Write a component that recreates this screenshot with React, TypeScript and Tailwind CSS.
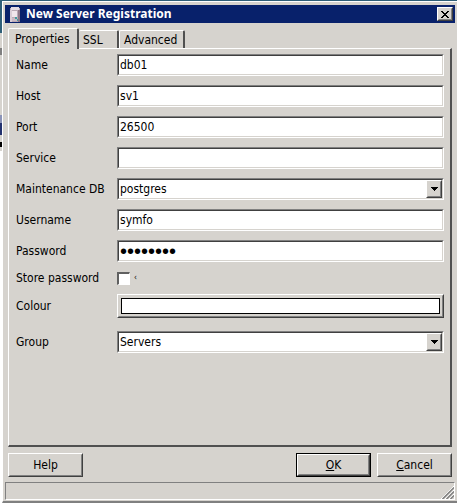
import { useState } from 'react';
import type { ReactNode } from 'react';

const raised = 'border border-t-white border-l-white border-r-[#404040] border-b-[#404040]';
const raisedInner = 'border border-t-[#d6d3ce] border-l-[#d6d3ce] border-r-[#808080] border-b-[#808080]';
const sunken = 'border border-t-[#808080] border-l-[#808080] border-r-white border-b-white';
const sunkenInner = 'border border-t-[#404040] border-l-[#404040] border-r-[#d6d3ce] border-b-[#d6d3ce]';

const behind = [
    { height: 'h-[33px]', color: 'bg-[#2f5f78]' },
    { height: 'h-[15px]', color: 'bg-[#d6d3ce]' },
    { height: 'h-[7px]', color: 'bg-[#808080]' },
    { height: 'h-[60px]', color: 'bg-[#d6d3ce]' },
    { height: 'h-[8px]', color: 'bg-[#8c94b8]' },
    { height: 'h-[12px]', color: 'bg-[#24326e]' },
    { height: 'h-[7px]', color: 'bg-[#d6d3ce]' },
    { height: 'h-[5px]', color: 'bg-black' },
    { height: 'h-[4px]', color: 'bg-[#d6d3ce]' },
];

function Row({ id, label, children }: { id: string; label: string; children: ReactNode }) {
    return (
        <div className="flex items-center">
            <label htmlFor={id} className="w-[101px] shrink-0 leading-[14px]">
                {label}
            </label>
            {children}
        </div>
    );
}

function TextField({ id, label, value, type = 'text' }: { id: string; label: string; value: string; type?: string }) {
    const [text, setText] = useState(value);
    const font = type === 'password' ? "font-['Liberation_Sans',sans-serif] text-[20px] leading-[16px]" : 'pb-px';
    return (
        <Row id={id} label={label}>
            <div className={`flex h-[22px] min-w-0 flex-1 ${sunken}`}>
                <input
                    id={id}
                    type={type}
                    value={text}
                    onChange={(e) => setText(e.target.value)}
                    className={`w-full min-w-0 bg-white px-px outline-none ${font} ${sunkenInner}`}
                />
            </div>
        </Row>
    );
}

function SelectField({ id, label, value }: { id: string; label: string; value: string }) {
    return (
        <Row id={id} label={label}>
            <div className={`h-[22px] min-w-0 flex-1 ${sunken}`}>
                <div className={`relative flex h-full bg-white ${sunkenInner}`}>
                    <select id={id} defaultValue={value} className="w-full appearance-none bg-transparent px-px pb-px outline-none">
                        <option>{value}</option>
                    </select>
                    <span className={`pointer-events-none absolute inset-y-0 right-0 w-4 bg-[#d6d3ce] ${raised}`}>
                        <span className={`flex h-full items-center justify-center ${raisedInner}`}>
                            <svg width="7" height="4" viewBox="0 0 7 4" shapeRendering="crispEdges">
                                <path d="M0 0h7v1H0zM1 1h5v1H1zM2 2h3v1H2zM3 3h1v1H3z" />
                            </svg>
                        </span>
                    </span>
                </div>
            </div>
        </Row>
    );
}

function PushButton({ children, primary = false }: { children: ReactNode; primary?: boolean }) {
    return (
        <button type="button" className={`h-6 w-[75px] ${primary ? 'border border-black' : ''}`}>
            <span className={`block h-full ${raised}`}>
                <span className={`flex h-full items-center justify-center ${raisedInner}`}>
                    <span>{children}</span>
                </span>
            </span>
        </button>
    );
}

function TitleBar() {
    return (
        <header className="flex h-[18px] items-center bg-[#08216b] pr-[2px] pl-1 text-white">
            <svg width="12" height="17" viewBox="0 0 12 17" shapeRendering="crispEdges">
                <path d="M2 1h8v1h1v14H1V2h1z" fill="#b9a9b5" />
                <path d="M2 1h8v3H2z" fill="#e4dce4" />
                <path d="M1 4h2v12H1z" fill="#d9cdd6" />
                <path d="M3 5h5v6H3z" fill="#f0e6ec" />
                <path d="M9 4h2v12H9z" fill="#8d7888" />
                <path d="M3 12h5v3H3z" fill="#cbb9c3" />
                <path d="M6 11h2v2H6zM8 13h1v2H8z" fill="#3f9ca0" />
            </svg>
            <h1 className="flex-1 pl-[5px] font-['Noto_Sans',sans-serif] text-[12px] leading-[18px] font-bold">New Server Registration</h1>
            <button type="button" aria-label="Close" className={`h-[14px] w-4 bg-[#d6d3ce] ${raised}`}>
                <span className={`flex h-full items-center justify-center ${raisedInner}`}>
                    <svg width="8" height="7" viewBox="0 0 8 7" shapeRendering="crispEdges">
                        <path d="M0 0h2v1h1v1h2V1h1V0h2v1H7v1H6v1H5v1h1v1h1v1h1v1H6V6H5V5H3v1H2v1H0V6h1V5h1V4h1V3H2V2H1V1H0z" fill="#000" />
                    </svg>
                </span>
            </button>
        </header>
    );
}

function Tabs() {
    const tab = 'rounded-t-[2px] border-t border-t-white border-l-white border-r-2 border-r-[#505050] text-left';
    return (
        <div role="tablist" className="flex items-end px-[3px]">
            <button type="button" role="tab" aria-selected="true" className={`relative -mb-px h-[21px] w-[71px] border-l bg-[#d6d3ce] pb-px pl-[6px] ${tab}`}>
                Properties
            </button>
            <button type="button" role="tab" aria-selected="false" className={`h-[18px] w-10 pl-1 ${tab}`}>
                SSL
            </button>
            <button type="button" role="tab" aria-selected="false" className={`h-[18px] w-[66px] border-l pl-1 ${tab}`}>
                Advanced
            </button>
        </div>
    );
}

export default function App() {
    return (
        <div className="flex min-h-screen bg-white font-['DejaVu_Sans_Condensed','DejaVu_Sans','Noto_Sans_CJK_JP',sans-serif] text-[12px] leading-[16px] text-black">
            <div className="w-[2px] shrink-0">
                {behind.map((b, i) => (
                    <div key={i} className={`${b.height} ${b.color}`} />
                ))}
            </div>
            <div className="flex flex-1 flex-col border-t border-t-[#2f5f78]">
                <main className="flex flex-1 flex-col border-t border-l border-b-2 border-white border-b-[#808080] bg-[#d6d3ce] pt-[3px] pr-[2px] pl-[2px]">
                    <TitleBar />
                    <div className="h-[5px]" />
                    <Tabs />
                    <section className="mr-[3px] ml-[3px] flex-1 border-t border-r-2 border-b-2 border-l border-t-white border-r-[#505050] border-b-[#505050] border-l-white pt-[5px] pr-[6px] pl-[7px]">
                        <form className="flex flex-col gap-[9px]">
                            <TextField id="name" label="Name" value="db01" />
                            <TextField id="host" label="Host" value="sv1" />
                            <TextField id="port" label="Port" value="26500" />
                            <TextField id="service" label="Service" value="" />
                            <SelectField id="maintenance" label="Maintenance DB" value="postgres" />
                            <TextField id="username" label="Username" value="symfo" />
                            <TextField id="password" label="Password" value="password" type="password" />
                            <Row id="store" label="Store password">
                                <input
                                    id="store"
                                    type="checkbox"
                                    className="size-[13px] appearance-none border-t-2 border-r border-b border-l-2 border-t-[#606060] border-r-white border-b-white border-l-[#606060] bg-white"
                                />
                                <span className="pl-1 text-[8px] leading-[14px]">‹</span>
                            </Row>
                            <Row id="colour" label="Colour">
                                <button id="colour" type="button" className={`h-6 flex-1 ${raised}`}>
                                    <span className={`block h-full p-[2px] ${raisedInner}`}>
                                        <span className="block h-full border border-black bg-white" />
                                    </span>
                                </button>
                            </Row>
                            <div className="pt-1">
                                <SelectField id="group" label="Group" value="Servers" />
                            </div>
                        </form>
                    </section>
                    <div className="flex gap-[6px] px-[3px] pt-[6px] pb-[5px]">
                        <PushButton>Help</PushButton>
                        <span className="flex-1" />
                        <PushButton primary>
                            <u>O</u>K
                        </PushButton>
                        <PushButton>
                            <u>C</u>ancel
                        </PushButton>
                    </div>
                    <footer className={`mb-px flex h-[18px] items-end justify-end ${sunken}`}>
                        <svg width="13" height="13" viewBox="0 0 13 13">
                            <path d="M0 13L13 0M4 13L13 4M8 13L13 8" stroke="#fff" strokeWidth="1" />
                            <path d="M1.500 13L13 1.500M5.500 13L13 5.500M9.500 13L13 9.500" stroke="#808080" strokeWidth="1.500" />
                        </svg>
                    </footer>
                </main>
            </div>
        </div>
    );
}
